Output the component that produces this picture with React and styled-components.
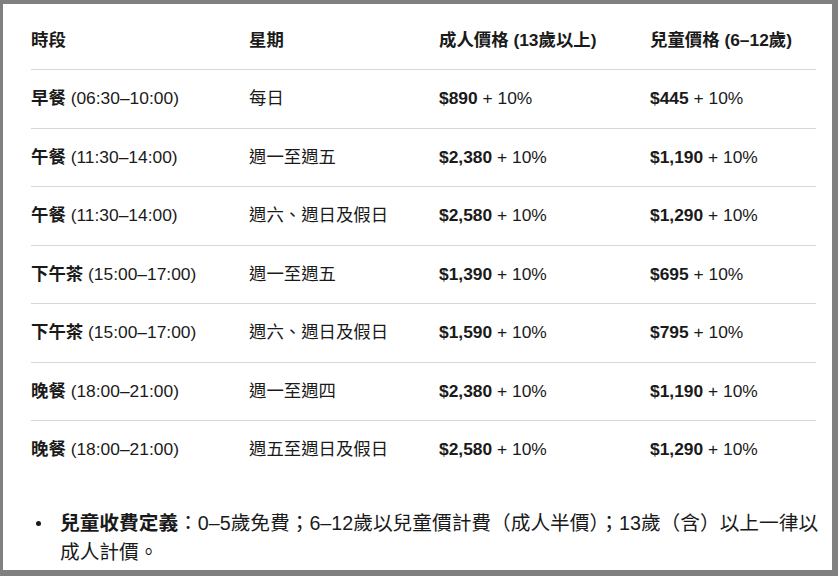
import React from 'react'
import styled, { createGlobalStyle } from 'styled-components'

const Global = createGlobalStyle`
  html, body {
    margin: 0;
    padding: 0;
    background: #808080;
  }
  body {
    font-family: "Liberation Sans", "Noto Sans CJK TC", sans-serif;
    color: #1a1a1a;
  }
`

const Panel = styled.div`
  box-sizing: border-box;
  width: 829px;
  height: 566px;
  margin: 4px 0 0 3px;
  padding: 7.5px 0 0 28px;
  background: #fff;
  overflow: hidden;
`

const Table = styled.table`
  width: 785px;
  border-collapse: collapse;
  table-layout: fixed;
  font-size: 17.4px;
`

const Row = styled.tr`
  border-bottom: ${p => (p.$last ? 'none' : '1px solid #d6d6d6')};
`

const Head = styled.th`
  padding: 16.25px 0;
  line-height: 25px;
  text-align: left;
  font-weight: 700;
  white-space: nowrap;
`

const Cell = styled.td`
  padding: 16.25px 0;
  line-height: 25px;
  white-space: nowrap;
`

const B = styled.b`
  font-weight: 700;
`

const Notes = styled.ul`
  list-style: none;
  margin: 30px 0 0 0;
  padding: 0;
  font-size: 19.7px;
  line-height: 29px;
`

const Note = styled.li`
  display: flex;
  align-items: flex-start;
`

const Dot = styled.span`
  flex: none;
  width: 5px;
  height: 5px;
  margin: 12px 19px 0 5px;
  border-radius: 50%;
  background: #1a1a1a;
`

const NoteText = styled.span`
  flex: 1;
`

const rows = [
  ['早餐', '(06:30–10:00)', '每日', '$890', '$445'],
  ['午餐', '(11:30–14:00)', '週一至週五', '$2,380', '$1,190'],
  ['午餐', '(11:30–14:00)', '週六、週日及假日', '$2,580', '$1,290'],
  ['下午茶', '(15:00–17:00)', '週一至週五', '$1,390', '$695'],
  ['下午茶', '(15:00–17:00)', '週六、週日及假日', '$1,590', '$795'],
  ['晚餐', '(18:00–21:00)', '週一至週四', '$2,380', '$1,190'],
  ['晚餐', '(18:00–21:00)', '週五至週日及假日', '$2,580', '$1,290'],
]

export default function App() {
  return (
    <>
      <Global />
      <Panel>
        <Table>
          <colgroup>
            <col style={{ width: 218 }} />
            <col style={{ width: 190 }} />
            <col style={{ width: 211 }} />
            <col style={{ width: 166 }} />
          </colgroup>
          <thead>
            <Row>
              <Head>時段</Head>
              <Head>星期</Head>
              <Head>成人價格 (13歲以上)</Head>
              <Head>兒童價格 (6–12歲)</Head>
            </Row>
          </thead>
          <tbody>
            {rows.map((r, i) => (
              <Row key={i} $last={i === rows.length - 1}>
                <Cell><B>{r[0]}</B> {r[1]}</Cell>
                <Cell>{r[2]}</Cell>
                <Cell><B>{r[3]}</B> + 10%</Cell>
                <Cell><B>{r[4]}</B> + 10%</Cell>
              </Row>
            ))}
          </tbody>
        </Table>
        <Notes>
          <Note>
            <Dot />
            <NoteText>
              <B>兒童收費定義</B>：0–5歲免費；6–12歲以兒童價計費（成人半價）；13歲（含）以上一律以成人計價。
            </NoteText>
          </Note>
        </Notes>
      </Panel>
    </>
  )
}
